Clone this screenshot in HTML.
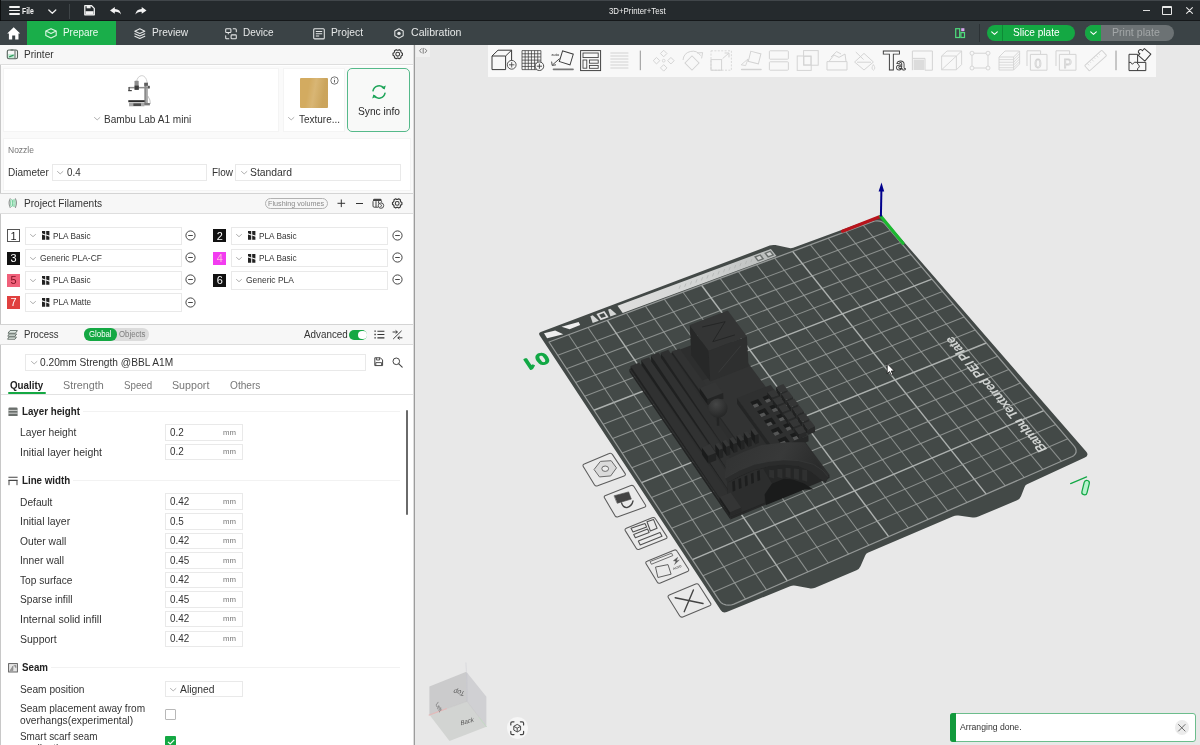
<!DOCTYPE html>
<html><head><meta charset="utf-8"><title>3D+Printer+Test</title>
<style>
*{box-sizing:border-box;margin:0;padding:0}
html,body{width:1200px;height:745px;overflow:hidden;background:#e8e8e8;font-family:"Liberation Sans",sans-serif;color:#2e2e2e}
#app{position:relative;width:1200px;height:745px;overflow:hidden;will-change:transform}
#app div,#app svg,#app span{position:absolute}
.t{white-space:nowrap;line-height:1.15}
.hdr{left:0;width:413px;background:#f7f7f7;border-top:1px solid #d4d4d4;border-bottom:1px solid #dedede}
.box{border:1px solid #e9e9e9;background:#fff}
.sw{width:13px;height:13px;font-size:10px;text-align:center;line-height:13px;color:#fff}
svg{overflow:visible}
</style></head><body>
<div id="app">
<div style="left:0;top:0;width:1200px;height:21px;background:#252a2d"></div>
<div style="left:0;top:0;width:1200px;height:1.2px;background:#41464a"></div>
<div style="left:0;top:20px;width:1200px;height:1px;background:#15181a"></div>
<div style="left:0;top:0;width:1px;height:21px;background:#0c0e0f"></div>
<div style="left:9px;top:6.3px;width:10.6px;height:1.3px;background:#f2f2f2;border-radius:1px"></div>
<div style="left:9px;top:9.9px;width:10.6px;height:1.3px;background:#f2f2f2;border-radius:1px"></div>
<div style="left:9px;top:13.4px;width:10.6px;height:1.3px;background:#f2f2f2;border-radius:1px"></div>
<div class="t" style="left:22.3px;top:6.3px;font-size:9.03px;color:#f4f4f4;font-weight:bold;transform:scaleX(0.7586);transform-origin:0 0;">File</div>
<svg style="left:48px;top:8.5px" width="9" height="6" viewBox="0 0 9 6"><path d="M0.8 1 L4.3 4.3 L7.8 1" fill="none" stroke="#eee" stroke-width="1.3" stroke-linecap="round" stroke-linejoin="round"/></svg>
<div style="left:69px;top:4px;width:1px;height:15px;background:#3e4447"></div>
<svg style="left:84px;top:5.3px" width="11" height="10.5" viewBox="0 0 11 10.5"><path d="M0.8 0.7 H7.6 L10.3 3.4 V9.8 H0.8 Z" fill="none" stroke="#f2f2f2" stroke-width="1.3" stroke-linejoin="round"/><rect x="2.6" y="0.7" width="4" height="2.6" fill="#f2f2f2"/><rect x="1.5" y="6.2" width="8" height="3.4" fill="#f2f2f2"/></svg>
<svg style="left:109.5px;top:7px" width="11.5" height="8" viewBox="0 0 11.5 8"><path d="M4.8 0 L0 3.4 L4.8 6.8 V4.9 C7.6 4.7 9.6 5.6 11 7.6 C10.8 4.2 8.6 2 4.8 1.9 Z" fill="#f2f2f2"/></svg>
<svg style="left:135px;top:7px" width="11.5" height="8" viewBox="0 0 11.5 8"><path transform="translate(11.5,0) scale(-1,1)" d="M4.8 0 L0 3.4 L4.8 6.8 V4.9 C7.6 4.7 9.6 5.6 11 7.6 C10.8 4.2 8.6 2 4.8 1.9 Z" fill="#f2f2f2"/></svg>
<div class="t" style="left:609.3px;top:6.9px;font-size:8.61px;color:#f0f0f0;transform:scaleX(0.9130);transform-origin:0 0;">3D+Printer+Test</div>
<div style="left:1142.5px;top:9.6px;width:7px;height:1.3px;background:#ddd"></div>
<div style="left:1162px;top:6.2px;width:10.2px;height:8.6px;border:1.2px solid #e8e8e8;border-top-width:2.4px;border-radius:1px"></div>
<svg style="left:1185.5px;top:7.4px" width="7" height="7" viewBox="0 0 7 7"><path d="M0.6 0.6 L6.4 6.4 M6.4 0.6 L0.6 6.4" stroke="#e8e8e8" stroke-width="1.1" stroke-linecap="round"/></svg>
<div style="left:0;top:21px;width:1200px;height:23.5px;background:#3b4346"></div>
<div style="left:26.5px;top:21px;width:89.5px;height:23.5px;background:#1aae4a"></div>
<svg style="left:7px;top:26.5px" width="13.4" height="13" viewBox="0 0 13.4 13"><path d="M6.7 0.3 L0.2 6.4 H1.9 V12.6 H5.2 V8.6 H8.2 V12.6 H11.5 V6.4 H13.2 Z" fill="#fff"/></svg>
<svg style="left:44.5px;top:28px" width="12" height="10.6" viewBox="0 0 12 10.6"><path d="M6 0.7 L11.2 3 V7.4 L6 9.9 L0.8 7.4 V3 Z M0.9 3 L6 5.4 L11.1 3" fill="none" stroke="#d9f5e1" stroke-width="1.15" stroke-linejoin="round"/></svg>
<div class="t" style="left:63.2px;top:26.4px;font-size:11.13px;color:#eafbef;transform:scaleX(0.8890);transform-origin:0 0;">Prepare</div>
<svg style="left:134px;top:27.5px" width="11.6" height="11.6" viewBox="0 0 11.6 11.6"><path d="M5.8 0.8 L10.8 3.2 L5.8 5.6 L0.8 3.2 Z M0.8 5.7 L5.8 8.1 L10.8 5.7 M0.8 8.2 L5.8 10.6 L10.8 8.2" fill="none" stroke="#e4e6e6" stroke-width="1.05" stroke-linejoin="round" stroke-linecap="round"/></svg>
<div class="t" style="left:151.8px;top:26.4px;font-size:11.13px;color:#e6e8e8;transform:scaleX(0.9145);transform-origin:0 0;">Preview</div>
<svg style="left:225px;top:27.5px" width="12" height="11.6" viewBox="0 0 12 11.6"><rect x="0.7" y="0.7" width="5.2" height="3.9" rx="0.8" fill="none" stroke="#e4e6e6" stroke-width="1.05"/><path d="M3.3 4.6 V6.2" stroke="#e4e6e6" stroke-width="1.05"/><rect x="6.1" y="6.9" width="5.2" height="3.9" rx="0.8" fill="none" stroke="#e4e6e6" stroke-width="1.05"/><path d="M8.2 0.8 H10.2 Q11.3 0.8 11.3 1.9 V3.8 M3.8 10.8 H1.8 Q0.7 10.8 0.7 9.7 V7.8" fill="none" stroke="#e4e6e6" stroke-width="1.05" stroke-linecap="round"/></svg>
<div class="t" style="left:243.3px;top:26.4px;font-size:11.13px;color:#e6e8e8;transform:scaleX(0.8995);transform-origin:0 0;">Device</div>
<svg style="left:313px;top:27.5px" width="12" height="11.6" viewBox="0 0 12 11.6"><rect x="0.7" y="0.7" width="10.6" height="10.2" rx="1" fill="none" stroke="#e4e6e6" stroke-width="1.05"/><path d="M2.8 3.6 H9.2 M2.8 5.8 H9.2 M2.8 8 H6.2" stroke="#e4e6e6" stroke-width="1.05"/></svg>
<div class="t" style="left:331.2px;top:26.4px;font-size:11.13px;color:#e6e8e8;transform:scaleX(0.9238);transform-origin:0 0;">Project</div>
<svg style="left:394.2px;top:27.8px" width="10" height="10.8" viewBox="0 0 10 10.8"><path d="M5 0.7 L9.2 3 V7.8 L5 10.1 L0.8 7.8 V3 Z" fill="none" stroke="#e4e6e6" stroke-width="1.05" stroke-linejoin="round"/><circle cx="5" cy="5.4" r="1.7" fill="#e4e6e6"/></svg>
<div class="t" style="left:411.3px;top:26.4px;font-size:11.13px;color:#e6e8e8;transform:scaleX(0.9492);transform-origin:0 0;">Calibration</div>
<svg style="left:954.5px;top:27.5px" width="10.5" height="10.5" viewBox="0 0 10.5 10.5"><rect x="0.7" y="0.7" width="4" height="8.8" fill="none" stroke="#4fdc7c" stroke-width="1.2"/><rect x="5.9" y="4.6" width="3.6" height="4.9" fill="none" stroke="#4fdc7c" stroke-width="1.2"/><rect x="6.2" y="0.2" width="3.2" height="3" fill="#d9a6f0"/></svg>
<div style="left:979px;top:24px;width:1px;height:18px;background:#2c3235"></div>
<div style="left:986.8px;top:25px;width:88.2px;height:15.8px;border-radius:8px;background:#14a843"></div>
<div style="left:1002.4px;top:25px;width:1px;height:15.8px;background:#0e8a36"></div>
<svg style="left:991.3px;top:31px" width="7" height="4.5" viewBox="0 0 7 4.5"><path d="M0.7 0.9 L3.5 3.4 L6.3 0.9" fill="none" stroke="#fff" stroke-width="1.1" stroke-linecap="round" stroke-linejoin="round"/></svg>
<div class="t" style="left:1013.3px;top:26.4px;font-size:11.13px;color:#fff;transform:scaleX(0.9075);transform-origin:0 0;">Slice plate</div>
<div style="left:1085px;top:25px;width:89.2px;height:15.8px;border-radius:8px;background:#6c7274"></div>
<div style="left:1085px;top:25px;width:16.2px;height:15.8px;border-radius:8px 0 0 8px;background:#14a843"></div>
<svg style="left:1090px;top:31px" width="7" height="4.5" viewBox="0 0 7 4.5"><path d="M0.7 0.9 L3.5 3.4 L6.3 0.9" fill="none" stroke="#fff" stroke-width="1.1" stroke-linecap="round" stroke-linejoin="round"/></svg>
<div class="t" style="left:1111.8px;top:26.4px;font-size:11.13px;color:#a3a7a8;transform:scaleX(0.9539);transform-origin:0 0;">Print plate</div>
<div style="left:0;top:44.5px;width:413px;height:701px;background:#fff"></div>
<div style="left:413px;top:44.5px;width:2.4px;height:701px;background:#dcdcdc"></div>
<div style="left:413.5px;top:44.5px;width:1.2px;height:701px;background:#9c9c9c"></div>
<div style="left:0;top:44.5px;width:1px;height:701px;background:#c8c8c8"></div>
<div class="hdr" style="top:44.5px;height:20.6px;border-top:none"></div>
<svg style="left:0;top:0" width="30" height="70" viewBox="0 0 30 70"><rect x="8" y="54" width="6.6" height="4.2" fill="#c6ebd6"/><path d="M9.2 56.9 L13.6 55.2" stroke="#2e9a5c" stroke-width="1.3"/><rect x="7.3" y="50" width="10.2" height="8.8" rx="1.6" fill="none" stroke="#55625b" stroke-width="1.1"/><path d="M15 50.2 V58.6 M10.6 50 H13.4" stroke="#55625b" stroke-width="1"/></svg>
<div class="t" style="left:24.4px;top:48.4px;font-size:10.92px;color:#333;transform:scaleX(0.9203);transform-origin:0 0;">Printer</div>
<svg style="left:0;top:0" width="1" height="1"><polygon points="401.45,52.72 402.40,53.20 402.40,55.20 401.45,55.68 400.86,56.70 400.91,57.77 399.18,58.77 398.29,58.19 397.11,58.19 396.22,58.77 394.49,57.77 394.54,56.70 393.95,55.68 393.00,55.20 393.00,53.20 393.95,52.72 394.54,51.70 394.49,50.63 396.22,49.63 397.11,50.21 398.29,50.21 399.18,49.63 400.91,50.63 400.86,51.70" fill="none" stroke="#3a3a3a" stroke-width="1.15" stroke-linejoin="round"/><circle cx="397.7" cy="54.2" r="1.92" fill="none" stroke="#3a3a3a" stroke-width="1.05"/></svg>
<div style="left:1px;top:66px;width:412px;height:127px;background:#fafafa"></div>
<div class="box" style="left:3px;top:68px;width:275.5px;height:63.5px;border-color:#f4f4f4"></div>
<div class="box" style="left:283px;top:68px;width:61.5px;height:63.5px;border-color:#f4f4f4"></div>
<svg style="left:0;top:0" width="200" height="120" viewBox="0 0 200 120">
<path d="M136.6 81.6 C137.4 74.4 145.8 72.6 147.2 82.8" fill="none" stroke="#b9b9b9" stroke-width="0.7"/>
<rect x="144.3" y="82.8" width="3.6" height="21.8" fill="#8a8a8a"/>
<rect x="146.3" y="82.8" width="1.6" height="21.8" fill="#b5b5b5"/>
<rect x="144.3" y="82.8" width="3.6" height="3" fill="#5e5e5e"/>
<rect x="128.9" y="86.9" width="20.6" height="1.5" fill="#8e8e8e"/>
<rect x="148" y="85.8" width="1.8" height="2.6" fill="#555"/>
<rect x="134.5" y="80.8" width="4.2" height="9" rx="0.6" fill="#8c8c8c"/>
<rect x="134.6" y="85.6" width="4.2" height="4.2" fill="#3c3c3c"/>
<rect x="128.4" y="87" width="1.4" height="3.4" fill="#555"/>
<rect x="128.2" y="90" width="3.6" height="1.2" fill="#444"/>
<path d="M147.9 96 Q150.6 100 150.4 104" fill="none" stroke="#aaa" stroke-width="0.7"/>
<rect x="128.3" y="100.2" width="16.4" height="2" fill="#2a2a2a"/>
<rect x="129" y="102.8" width="15.4" height="3.5" fill="#a8a8a8"/>
<rect x="133.4" y="103.4" width="7.6" height="2.6" fill="#4a4a4a"/>
<rect x="144.3" y="103" width="5.6" height="2.4" fill="#777"/>
</svg>
<svg style="left:93.5px;top:116.5px" width="6.4" height="3.4" viewBox="0 0 6.4 3.4"><path d="M0.5 0.5 L3.2 2.9 L5.9 0.5" fill="none" stroke="#a6a6a6" stroke-width="0.9" stroke-linecap="round" stroke-linejoin="round"/></svg>
<div class="t" style="left:104.3px;top:112.5px;font-size:10.82px;color:#333;transform:scaleX(0.9303);transform-origin:0 0;">Bambu Lab A1 mini</div>
<div style="left:299.5px;top:78px;width:28.5px;height:29.5px;background:#d3ab60;border-radius:1px"></div>
<div style="left:299.5px;top:78px;width:28.5px;height:29.5px;background:linear-gradient(100deg,rgba(255,255,255,0) 30%,rgba(255,255,255,.13) 50%,rgba(0,0,0,.04) 80%)"></div>
<svg style="left:329.5px;top:76px" width="9" height="9" viewBox="0 0 9 9"><circle cx="4.5" cy="4.5" r="3.7" fill="none" stroke="#555" stroke-width="0.8"/><path d="M4.5 3.9 V6.5 M4.5 2.5 V3.1" stroke="#555" stroke-width="0.9"/></svg>
<svg style="left:288.3px;top:116.5px" width="6.4" height="3.4" viewBox="0 0 6.4 3.4"><path d="M0.5 0.5 L3.2 2.9 L5.9 0.5" fill="none" stroke="#a6a6a6" stroke-width="0.9" stroke-linecap="round" stroke-linejoin="round"/></svg>
<div class="t" style="left:299.2px;top:112.5px;font-size:10.82px;color:#333;transform:scaleX(0.9218);transform-origin:0 0;">Texture...</div>
<div style="left:347.4px;top:68px;width:63px;height:64px;border:1px solid #55b98a;border-radius:5px;background:#f8f9f8"></div>
<svg style="left:369.5px;top:83px" width="18" height="18" viewBox="0 0 18 18"><path d="M3 7.8 A6.2 6.2 0 0 1 14 5.2 M15 10.2 A6.2 6.2 0 0 1 4 12.8" fill="none" stroke="#1fa55a" stroke-width="1.5" stroke-linecap="round"/><path d="M15.8 2.6 L14.6 6.4 L11.2 4.6 Z M2.2 15.4 L3.4 11.6 L6.8 13.4 Z" fill="#1fa55a"/></svg>
<div class="t" style="left:357.6px;top:105.4px;font-size:10.82px;color:#2a2a2a;transform:scaleX(0.9441);transform-origin:0 0;">Sync info</div>
<div class="box" style="left:3px;top:138px;width:407.5px;height:53px;border-color:#f4f4f4;background:#fff"></div>
<div class="t" style="left:8.0px;top:145.1px;font-size:9.03px;color:#777;transform:scaleX(0.9420);transform-origin:0 0;">Nozzle</div>
<div class="t" style="left:8.0px;top:165.8px;font-size:10.82px;color:#333;transform:scaleX(0.9300);transform-origin:0 0;">Diameter</div>
<div class="box" style="left:51.5px;top:164px;width:155px;height:16.5px"></div>
<svg style="left:57.2px;top:170.7px" width="6.4" height="3.4" viewBox="0 0 6.4 3.4"><path d="M0.5 0.5 L3.2 2.9 L5.9 0.5" fill="none" stroke="#a6a6a6" stroke-width="0.9" stroke-linecap="round" stroke-linejoin="round"/></svg>
<div class="t" style="left:66.6px;top:166.3px;font-size:10.50px;color:#333;transform:scaleX(0.9317);transform-origin:0 0;">0.4</div>
<div class="t" style="left:212.0px;top:165.8px;font-size:10.82px;color:#333;transform:scaleX(0.9197);transform-origin:0 0;">Flow</div>
<div class="box" style="left:235px;top:164px;width:165.5px;height:16.5px"></div>
<svg style="left:240.5px;top:170.7px" width="6.4" height="3.4" viewBox="0 0 6.4 3.4"><path d="M0.5 0.5 L3.2 2.9 L5.9 0.5" fill="none" stroke="#a6a6a6" stroke-width="0.9" stroke-linecap="round" stroke-linejoin="round"/></svg>
<div class="t" style="left:250.4px;top:166.2px;font-size:10.61px;color:#333;transform:scaleX(0.9758);transform-origin:0 0;">Standard</div>
<div class="hdr" style="top:193px;height:21px"></div>
<svg style="left:0;top:0" width="30" height="215" viewBox="0 0 30 215"><path d="M10.2 198.8 Q8 203 10.2 207.4 M15.4 198.8 Q17.6 203 15.4 207.4" fill="none" stroke="#8f9592" stroke-width="1.1" stroke-linecap="round"/><ellipse cx="11.7" cy="203.1" rx="1.1" ry="3.6" fill="#e3f6ea" stroke="#62c98e" stroke-width="0.85"/><ellipse cx="14" cy="203.1" rx="1.1" ry="3.6" fill="#e3f6ea" stroke="#62c98e" stroke-width="0.85"/></svg>
<div class="t" style="left:24.4px;top:197.2px;font-size:10.92px;color:#333;transform:scaleX(0.9271);transform-origin:0 0;">Project Filaments</div>
<div style="left:264.5px;top:197.6px;width:63.3px;height:11.8px;border:1px solid #b2b2b2;border-radius:6px;background:#f6f6f6"></div>
<div class="t" style="left:268.2px;top:198.9px;font-size:7.98px;color:#8a8a8a;transform:scaleX(0.9051);transform-origin:0 0;">Flushing volumes</div>
<svg style="left:336.5px;top:199.2px" width="8.6" height="8.6" viewBox="0 0 8.6 8.6"><path d="M4.3 0.5 V8.1 M0.5 4.3 H8.1" stroke="#333" stroke-width="1"/></svg>
<div style="left:355.5px;top:203px;width:7.6px;height:1px;background:#333"></div>
<svg style="left:372px;top:198px" width="12.5" height="11" viewBox="0 0 12.5 11"><path d="M1 2.2 Q1 0.8 2.4 0.8 H8.2 Q9.6 0.8 9.6 2.2 V3 H1 Z" fill="#444"/><path d="M1 3.2 V8 Q1 9.2 2.2 9.2 H6 M9.6 3.2 V4.4 M4 3.2 V9 M6.6 3.2 V5.5" fill="none" stroke="#444" stroke-width="1"/><circle cx="9" cy="7.6" r="2.7" fill="#f7f7f7" stroke="#444" stroke-width="0.95"/><path d="M8.2 6.4 L10 7.6 L8.2 8.8" fill="none" stroke="#444" stroke-width="0.8"/></svg>
<svg style="left:0;top:0" width="1" height="1"><polygon points="400.95,201.92 401.90,202.40 401.90,204.40 400.95,204.88 400.36,205.90 400.41,206.97 398.68,207.97 397.79,207.39 396.61,207.39 395.72,207.97 393.99,206.97 394.04,205.90 393.45,204.88 392.50,204.40 392.50,202.40 393.45,201.92 394.04,200.90 393.99,199.83 395.72,198.83 396.61,199.41 397.79,199.41 398.68,198.83 400.41,199.83 400.36,200.90" fill="none" stroke="#3a3a3a" stroke-width="1.15" stroke-linejoin="round"/><circle cx="397.2" cy="203.4" r="1.92" fill="none" stroke="#3a3a3a" stroke-width="1.05"/></svg>
<div style="left:7px;top:229.4px;width:13px;height:13px;background:#ffffff;border:1px solid #555;"></div>
<div class="t" style="left:10.6px;top:229.8px;font-size:10.92px;color:#222;">1</div>
<div class="box" style="left:24.5px;top:226.6px;width:157px;height:18.6px"></div>
<svg style="left:30.2px;top:234.4px" width="6" height="3.2" viewBox="0 0 6 3.2"><path d="M0.5 0.5 L3.0 2.7 L5.5 0.5" fill="none" stroke="#a6a6a6" stroke-width="0.9" stroke-linecap="round" stroke-linejoin="round"/></svg>
<svg style="left:42px;top:231.4px" width="7.4" height="8.8" viewBox="0 0 7.4 8.8"><path d="M0 0 H3.2 V3.4 L0 2.2 Z M4.2 0 H7.4 V4.6 L4.2 3.4 Z M0 3.4 L3.2 4.6 V8.8 H0 Z M4.2 4.6 L7.4 5.8 V8.8 H4.2 Z" fill="#222"/></svg>
<div class="t" style="left:52.6px;top:230.5px;font-size:9.03px;color:#333;transform:scaleX(0.9136);transform-origin:0 0;">PLA Basic</div>
<svg style="left:185.3px;top:229.9px" width="11" height="11" viewBox="0 0 11 11"><circle cx="5.5" cy="5.5" r="4.6" fill="none" stroke="#3c3c3c" stroke-width="0.95"/><path d="M3.2 5.5 H7.8" stroke="#3c3c3c" stroke-width="0.95"/></svg>
<div style="left:7px;top:251.6px;width:13px;height:13px;background:#111111;"></div>
<div class="t" style="left:10.6px;top:252.0px;font-size:10.92px;color:#fff;">3</div>
<div class="box" style="left:24.5px;top:248.8px;width:157px;height:18.6px"></div>
<svg style="left:30.2px;top:256.6px" width="6" height="3.2" viewBox="0 0 6 3.2"><path d="M0.5 0.5 L3.0 2.7 L5.5 0.5" fill="none" stroke="#a6a6a6" stroke-width="0.9" stroke-linecap="round" stroke-linejoin="round"/></svg>
<div class="t" style="left:40.0px;top:252.7px;font-size:9.03px;color:#333;transform:scaleX(0.9358);transform-origin:0 0;">Generic PLA-CF</div>
<svg style="left:185.3px;top:252.10000000000002px" width="11" height="11" viewBox="0 0 11 11"><circle cx="5.5" cy="5.5" r="4.6" fill="none" stroke="#3c3c3c" stroke-width="0.95"/><path d="M3.2 5.5 H7.8" stroke="#3c3c3c" stroke-width="0.95"/></svg>
<div style="left:7px;top:273.8px;width:13px;height:13px;background:#f0607a;"></div>
<div class="t" style="left:10.6px;top:274.2px;font-size:10.92px;color:#7a1020;">5</div>
<div class="box" style="left:24.5px;top:271.0px;width:157px;height:18.6px"></div>
<svg style="left:30.2px;top:278.8px" width="6" height="3.2" viewBox="0 0 6 3.2"><path d="M0.5 0.5 L3.0 2.7 L5.5 0.5" fill="none" stroke="#a6a6a6" stroke-width="0.9" stroke-linecap="round" stroke-linejoin="round"/></svg>
<svg style="left:42px;top:275.8px" width="7.4" height="8.8" viewBox="0 0 7.4 8.8"><path d="M0 0 H3.2 V3.4 L0 2.2 Z M4.2 0 H7.4 V4.6 L4.2 3.4 Z M0 3.4 L3.2 4.6 V8.8 H0 Z M4.2 4.6 L7.4 5.8 V8.8 H4.2 Z" fill="#222"/></svg>
<div class="t" style="left:52.6px;top:274.9px;font-size:9.03px;color:#333;transform:scaleX(0.9136);transform-origin:0 0;">PLA Basic</div>
<svg style="left:185.3px;top:274.3px" width="11" height="11" viewBox="0 0 11 11"><circle cx="5.5" cy="5.5" r="4.6" fill="none" stroke="#3c3c3c" stroke-width="0.95"/><path d="M3.2 5.5 H7.8" stroke="#3c3c3c" stroke-width="0.95"/></svg>
<div style="left:7px;top:296.0px;width:13px;height:13px;background:#e0403f;"></div>
<div class="t" style="left:10.6px;top:296.4px;font-size:10.92px;color:#fff;">7</div>
<div class="box" style="left:24.5px;top:293.2px;width:157px;height:18.6px"></div>
<svg style="left:30.2px;top:301.0px" width="6" height="3.2" viewBox="0 0 6 3.2"><path d="M0.5 0.5 L3.0 2.7 L5.5 0.5" fill="none" stroke="#a6a6a6" stroke-width="0.9" stroke-linecap="round" stroke-linejoin="round"/></svg>
<svg style="left:42px;top:298.0px" width="7.4" height="8.8" viewBox="0 0 7.4 8.8"><path d="M0 0 H3.2 V3.4 L0 2.2 Z M4.2 0 H7.4 V4.6 L4.2 3.4 Z M0 3.4 L3.2 4.6 V8.8 H0 Z M4.2 4.6 L7.4 5.8 V8.8 H4.2 Z" fill="#222"/></svg>
<div class="t" style="left:52.6px;top:297.1px;font-size:9.03px;color:#333;transform:scaleX(0.9136);transform-origin:0 0;">PLA Matte</div>
<svg style="left:185.3px;top:296.5px" width="11" height="11" viewBox="0 0 11 11"><circle cx="5.5" cy="5.5" r="4.6" fill="none" stroke="#3c3c3c" stroke-width="0.95"/><path d="M3.2 5.5 H7.8" stroke="#3c3c3c" stroke-width="0.95"/></svg>
<div style="left:213.2px;top:229.4px;width:13px;height:13px;background:#111111;"></div>
<div class="t" style="left:216.8px;top:229.8px;font-size:10.92px;color:#fff;">2</div>
<div class="box" style="left:230.7px;top:226.6px;width:157px;height:18.6px"></div>
<svg style="left:236.39999999999998px;top:234.4px" width="6" height="3.2" viewBox="0 0 6 3.2"><path d="M0.5 0.5 L3.0 2.7 L5.5 0.5" fill="none" stroke="#a6a6a6" stroke-width="0.9" stroke-linecap="round" stroke-linejoin="round"/></svg>
<svg style="left:248.2px;top:231.4px" width="7.4" height="8.8" viewBox="0 0 7.4 8.8"><path d="M0 0 H3.2 V3.4 L0 2.2 Z M4.2 0 H7.4 V4.6 L4.2 3.4 Z M0 3.4 L3.2 4.6 V8.8 H0 Z M4.2 4.6 L7.4 5.8 V8.8 H4.2 Z" fill="#222"/></svg>
<div class="t" style="left:258.8px;top:230.5px;font-size:9.03px;color:#333;transform:scaleX(0.9136);transform-origin:0 0;">PLA Basic</div>
<svg style="left:391.5px;top:229.9px" width="11" height="11" viewBox="0 0 11 11"><circle cx="5.5" cy="5.5" r="4.6" fill="none" stroke="#3c3c3c" stroke-width="0.95"/><path d="M3.2 5.5 H7.8" stroke="#3c3c3c" stroke-width="0.95"/></svg>
<div style="left:213.2px;top:251.6px;width:13px;height:13px;background:#f23cf0;"></div>
<div class="t" style="left:216.8px;top:252.0px;font-size:10.92px;color:#fbd;">4</div>
<div class="box" style="left:230.7px;top:248.8px;width:157px;height:18.6px"></div>
<svg style="left:236.39999999999998px;top:256.6px" width="6" height="3.2" viewBox="0 0 6 3.2"><path d="M0.5 0.5 L3.0 2.7 L5.5 0.5" fill="none" stroke="#a6a6a6" stroke-width="0.9" stroke-linecap="round" stroke-linejoin="round"/></svg>
<svg style="left:248.2px;top:253.6px" width="7.4" height="8.8" viewBox="0 0 7.4 8.8"><path d="M0 0 H3.2 V3.4 L0 2.2 Z M4.2 0 H7.4 V4.6 L4.2 3.4 Z M0 3.4 L3.2 4.6 V8.8 H0 Z M4.2 4.6 L7.4 5.8 V8.8 H4.2 Z" fill="#222"/></svg>
<div class="t" style="left:258.8px;top:252.7px;font-size:9.03px;color:#333;transform:scaleX(0.9136);transform-origin:0 0;">PLA Basic</div>
<svg style="left:391.5px;top:252.10000000000002px" width="11" height="11" viewBox="0 0 11 11"><circle cx="5.5" cy="5.5" r="4.6" fill="none" stroke="#3c3c3c" stroke-width="0.95"/><path d="M3.2 5.5 H7.8" stroke="#3c3c3c" stroke-width="0.95"/></svg>
<div style="left:213.2px;top:273.8px;width:13px;height:13px;background:#111111;"></div>
<div class="t" style="left:216.8px;top:274.2px;font-size:10.92px;color:#fff;">6</div>
<div class="box" style="left:230.7px;top:271.0px;width:157px;height:18.6px"></div>
<svg style="left:236.39999999999998px;top:278.8px" width="6" height="3.2" viewBox="0 0 6 3.2"><path d="M0.5 0.5 L3.0 2.7 L5.5 0.5" fill="none" stroke="#a6a6a6" stroke-width="0.9" stroke-linecap="round" stroke-linejoin="round"/></svg>
<div class="t" style="left:246.2px;top:274.9px;font-size:9.03px;color:#333;transform:scaleX(0.9358);transform-origin:0 0;">Generic PLA</div>
<svg style="left:391.5px;top:274.3px" width="11" height="11" viewBox="0 0 11 11"><circle cx="5.5" cy="5.5" r="4.6" fill="none" stroke="#3c3c3c" stroke-width="0.95"/><path d="M3.2 5.5 H7.8" stroke="#3c3c3c" stroke-width="0.95"/></svg>
<div class="hdr" style="top:324px;height:20.5px"></div>
<svg style="left:0;top:0" width="30" height="345" viewBox="0 0 30 345"><path d="M10 330.6 H17.4 L15.4 333.2 H8 Z M9.2 334 H16.6 L15 336.2 H7.8 Z M9 337 H16.4 L15 339.2 H7.6 Z" fill="#eef7f1" stroke="#5f6a64" stroke-width="0.95" stroke-linejoin="round"/></svg>
<div class="t" style="left:24.4px;top:328.0px;font-size:10.92px;color:#333;transform:scaleX(0.8771);transform-origin:0 0;">Process</div>
<div style="left:83.5px;top:328.3px;width:65.5px;height:12.4px;border-radius:6.2px;background:#dcdcdc"></div>
<div style="left:83.5px;top:328.3px;width:33.5px;height:12.4px;border-radius:6.2px;background:#14a843"></div>
<div class="t" style="left:89.2px;top:329.8px;font-size:8.40px;color:#fff;transform:scaleX(0.9308);transform-origin:0 0;">Global</div>
<div class="t" style="left:119.3px;top:329.8px;font-size:8.40px;color:#7d7d7d;transform:scaleX(0.9306);transform-origin:0 0;">Objects</div>
<div class="t" style="left:304.0px;top:328.0px;font-size:10.71px;color:#333;transform:scaleX(0.9195);transform-origin:0 0;">Advanced</div>
<div style="left:349.4px;top:329.6px;width:18px;height:10.4px;border-radius:5.2px;background:#14a843"></div>
<div style="left:358.4px;top:330.7px;width:8.2px;height:8.2px;border-radius:4.1px;background:#fff"></div>
<svg style="left:373.5px;top:330px" width="11" height="9" viewBox="0 0 11 9"><path d="M3.4 1.2 H10.4 M3.4 4.5 H10.4 M3.4 7.8 H10.4" stroke="#333" stroke-width="1.15"/><path d="M0.4 1.2 H1.8 M0.4 4.5 H1.8 M0.4 7.8 H1.8" stroke="#333" stroke-width="1.3"/></svg>
<svg style="left:391.5px;top:329.5px" width="11" height="10" viewBox="0 0 11 10"><path d="M1.2 9 L9.6 0.8" stroke="#333" stroke-width="0.95"/><path d="M0.6 2 H5.4 M3.6 0.4 L5.4 2 L3.6 3.6 M10.4 7.8 H5.8 M7.6 6.2 L5.8 7.8 L7.6 9.4" fill="none" stroke="#333" stroke-width="0.95"/></svg>
<div class="box" style="left:24.5px;top:353.6px;width:341.5px;height:17px"></div>
<svg style="left:30.5px;top:360.5px" width="6.4" height="3.4" viewBox="0 0 6.4 3.4"><path d="M0.5 0.5 L3.2 2.9 L5.9 0.5" fill="none" stroke="#a6a6a6" stroke-width="0.9" stroke-linecap="round" stroke-linejoin="round"/></svg>
<div class="t" style="left:39.8px;top:355.6px;font-size:10.71px;color:#333;transform:scaleX(0.9502);transform-origin:0 0;">0.20mm Strength @BBL A1M</div>
<svg style="left:374px;top:357.3px" width="9.4" height="9.4" viewBox="0 0 9.4 9.4"><path d="M0.8 0.8 H6.4 L8.6 3 V8.6 H0.8 Z" fill="none" stroke="#444" stroke-width="1" stroke-linejoin="round"/><path d="M2.4 0.8 V3 H5.6 V0.8 M1.8 8.4 V5.6 H7.6 V8.4" fill="none" stroke="#444" stroke-width="0.9"/></svg>
<svg style="left:392px;top:356.5px" width="11" height="11" viewBox="0 0 11 11"><circle cx="4.3" cy="4.3" r="3.3" fill="none" stroke="#444" stroke-width="1"/><path d="M6.8 6.8 L10.2 10.2" stroke="#444" stroke-width="1.1" stroke-linecap="round"/></svg>
<div class="t" style="left:9.8px;top:379.1px;font-size:10.82px;color:#222;font-weight:bold;transform:scaleX(0.9056);transform-origin:0 0;">Quality</div>
<div style="left:8px;top:391.8px;width:37.5px;height:1.8px;background:#14a843;border-radius:1px"></div>
<div class="t" style="left:63.3px;top:379.1px;font-size:10.82px;color:#777;transform:scaleX(0.9980);transform-origin:0 0;">Strength</div>
<div class="t" style="left:123.5px;top:379.1px;font-size:10.82px;color:#777;transform:scaleX(0.9017);transform-origin:0 0;">Speed</div>
<div class="t" style="left:171.8px;top:379.1px;font-size:10.82px;color:#777;transform:scaleX(0.9874);transform-origin:0 0;">Support</div>
<div class="t" style="left:229.8px;top:379.1px;font-size:10.82px;color:#777;transform:scaleX(0.9367);transform-origin:0 0;">Others</div>
<div style="left:1px;top:394.3px;width:412px;height:1px;background:#e2e2e2"></div>
<div style="left:406.4px;top:409.5px;width:1.8px;height:105px;background:#6a6a6a;border-radius:1px"></div>
<div style="left:24px;top:411.3px;width:376px;height:1px;background:#f2f2f2"></div>
<svg style="left:8px;top:406.7px" width="10" height="9.6" viewBox="0 0 10 9.6"><path d="M1.6 0.6 H8.4 Q9.6 0.6 9.6 1.8 V9 H0.4 V1.8 Q0.4 0.6 1.6 0.6 Z" fill="#6a6f6c"/><path d="M0.4 3.4 H9.6 M0.4 6.2 H9.6" stroke="#fff" stroke-width="0.7"/></svg>
<div style="left:20px;top:406.5px;width:62.5px;height:10px;background:#fff"></div>
<div class="t" style="left:22.0px;top:405.5px;font-size:10.40px;color:#222;font-weight:bold;transform:scaleX(0.9380);transform-origin:0 0;">Layer height</div>
<div class="t" style="left:20.4px;top:426.3px;font-size:10.61px;color:#333;transform:scaleX(0.9646);transform-origin:0 0;">Layer height</div>
<div class="box" style="left:164.5px;top:424.2px;width:78px;height:16.6px"></div>
<div class="t" style="left:169.6px;top:426.7px;font-size:10.29px;color:#333;transform:scaleX(0.9621);transform-origin:0 0;">0.2</div>
<div class="t" style="left:223.2px;top:428.7px;font-size:7.56px;color:#777;transform:scaleX(1.0321);transform-origin:0 0;">mm</div>
<div class="t" style="left:20.4px;top:445.9px;font-size:10.61px;color:#333;transform:scaleX(0.9936);transform-origin:0 0;">Initial layer height</div>
<div class="box" style="left:164.5px;top:443.8px;width:78px;height:16.6px"></div>
<div class="t" style="left:169.6px;top:446.3px;font-size:10.29px;color:#333;transform:scaleX(0.9621);transform-origin:0 0;">0.2</div>
<div class="t" style="left:223.2px;top:448.3px;font-size:7.56px;color:#777;transform:scaleX(1.0321);transform-origin:0 0;">mm</div>
<div style="left:24px;top:480.4px;width:376px;height:1px;background:#f2f2f2"></div>
<svg style="left:8px;top:475.8px" width="10" height="9.6" viewBox="0 0 10 9.6"><path d="M0.4 1.2 H9.6 M0.4 4.4 H9.6" stroke="#444" stroke-width="1.1"/><path d="M1 4.4 V9.2 M9 4.4 V9.2" stroke="#444" stroke-width="1"/></svg>
<div style="left:20px;top:475.6px;width:52.7px;height:10px;background:#fff"></div>
<div class="t" style="left:22.0px;top:474.6px;font-size:10.40px;color:#222;font-weight:bold;transform:scaleX(0.9380);transform-origin:0 0;">Line width</div>
<div class="t" style="left:20.4px;top:495.5px;font-size:10.61px;color:#333;transform:scaleX(0.9642);transform-origin:0 0;">Default</div>
<div class="box" style="left:164.5px;top:493.4px;width:78px;height:16.6px"></div>
<div class="t" style="left:169.6px;top:495.9px;font-size:10.29px;color:#333;transform:scaleX(0.9621);transform-origin:0 0;">0.42</div>
<div class="t" style="left:223.2px;top:497.9px;font-size:7.56px;color:#777;transform:scaleX(1.0321);transform-origin:0 0;">mm</div>
<div class="t" style="left:20.4px;top:515.1px;font-size:10.61px;color:#333;transform:scaleX(0.9884);transform-origin:0 0;">Initial layer</div>
<div class="box" style="left:164.5px;top:513.0px;width:78px;height:16.6px"></div>
<div class="t" style="left:169.6px;top:515.5px;font-size:10.29px;color:#333;transform:scaleX(0.9621);transform-origin:0 0;">0.5</div>
<div class="t" style="left:223.2px;top:517.5px;font-size:7.56px;color:#777;transform:scaleX(1.0321);transform-origin:0 0;">mm</div>
<div class="t" style="left:20.4px;top:534.6px;font-size:10.61px;color:#333;transform:scaleX(0.9678);transform-origin:0 0;">Outer wall</div>
<div class="box" style="left:164.5px;top:532.5px;width:78px;height:16.6px"></div>
<div class="t" style="left:169.6px;top:535.0px;font-size:10.29px;color:#333;transform:scaleX(0.9621);transform-origin:0 0;">0.42</div>
<div class="t" style="left:223.2px;top:537.0px;font-size:7.56px;color:#777;transform:scaleX(1.0321);transform-origin:0 0;">mm</div>
<div class="t" style="left:20.4px;top:554.2px;font-size:10.61px;color:#333;transform:scaleX(0.9672);transform-origin:0 0;">Inner wall</div>
<div class="box" style="left:164.5px;top:552.1px;width:78px;height:16.6px"></div>
<div class="t" style="left:169.6px;top:554.6px;font-size:10.29px;color:#333;transform:scaleX(0.9621);transform-origin:0 0;">0.45</div>
<div class="t" style="left:223.2px;top:556.6px;font-size:7.56px;color:#777;transform:scaleX(1.0321);transform-origin:0 0;">mm</div>
<div class="t" style="left:20.4px;top:573.8px;font-size:10.61px;color:#333;transform:scaleX(0.9558);transform-origin:0 0;">Top surface</div>
<div class="box" style="left:164.5px;top:571.7px;width:78px;height:16.6px"></div>
<div class="t" style="left:169.6px;top:574.2px;font-size:10.29px;color:#333;transform:scaleX(0.9621);transform-origin:0 0;">0.42</div>
<div class="t" style="left:223.2px;top:576.2px;font-size:7.56px;color:#777;transform:scaleX(1.0321);transform-origin:0 0;">mm</div>
<div class="t" style="left:20.4px;top:593.4px;font-size:10.61px;color:#333;transform:scaleX(0.9559);transform-origin:0 0;">Sparse infill</div>
<div class="box" style="left:164.5px;top:591.3px;width:78px;height:16.6px"></div>
<div class="t" style="left:169.6px;top:593.8px;font-size:10.29px;color:#333;transform:scaleX(0.9621);transform-origin:0 0;">0.45</div>
<div class="t" style="left:223.2px;top:595.8px;font-size:7.56px;color:#777;transform:scaleX(1.0321);transform-origin:0 0;">mm</div>
<div class="t" style="left:20.4px;top:613.0px;font-size:10.61px;color:#333;transform:scaleX(1.0019);transform-origin:0 0;">Internal solid infill</div>
<div class="box" style="left:164.5px;top:610.9px;width:78px;height:16.6px"></div>
<div class="t" style="left:169.6px;top:613.4px;font-size:10.29px;color:#333;transform:scaleX(0.9621);transform-origin:0 0;">0.42</div>
<div class="t" style="left:223.2px;top:615.4px;font-size:7.56px;color:#777;transform:scaleX(1.0321);transform-origin:0 0;">mm</div>
<div class="t" style="left:20.4px;top:632.6px;font-size:10.61px;color:#333;transform:scaleX(0.9881);transform-origin:0 0;">Support</div>
<div class="box" style="left:164.5px;top:630.5px;width:78px;height:16.6px"></div>
<div class="t" style="left:169.6px;top:633.0px;font-size:10.29px;color:#333;transform:scaleX(0.9621);transform-origin:0 0;">0.42</div>
<div class="t" style="left:223.2px;top:635.0px;font-size:7.56px;color:#777;transform:scaleX(1.0321);transform-origin:0 0;">mm</div>
<div style="left:24px;top:667.3px;width:376px;height:1px;background:#f2f2f2"></div>
<svg style="left:8px;top:662.7px" width="10" height="9.6" viewBox="0 0 10 9.6"><rect x="0.6" y="0.6" width="8.8" height="8.4" fill="#e6e6e6" stroke="#555" stroke-width="0.9"/><path d="M2 7.6 L5 3 L5 7.6 Z M5.6 2.4 L8 2.4 L8 5" fill="#999" stroke="#777" stroke-width="0.5"/></svg>
<div style="left:20px;top:662.5px;width:30.5px;height:10px;background:#fff"></div>
<div class="t" style="left:22.0px;top:661.5px;font-size:10.40px;color:#222;font-weight:bold;transform:scaleX(0.9380);transform-origin:0 0;">Seam</div>
<div class="t" style="left:20.4px;top:682.7px;font-size:10.61px;color:#333;transform:scaleX(0.9598);transform-origin:0 0;">Seam position</div>
<div class="box" style="left:164.5px;top:680.5px;width:78px;height:16.6px"></div>
<svg style="left:169.8px;top:687.5px" width="6.4" height="3.4" viewBox="0 0 6.4 3.4"><path d="M0.5 0.5 L3.2 2.9 L5.9 0.5" fill="none" stroke="#a6a6a6" stroke-width="0.9" stroke-linecap="round" stroke-linejoin="round"/></svg>
<div class="t" style="left:180.2px;top:682.8px;font-size:10.61px;color:#333;transform:scaleX(0.9724);transform-origin:0 0;">Aligned</div>
<div class="t" style="left:20.4px;top:702.1px;font-size:10.61px;color:#333;transform:scaleX(0.9510);transform-origin:0 0;">Seam placement away from</div>
<div class="t" style="left:20.4px;top:713.9px;font-size:10.61px;color:#333;transform:scaleX(0.9633);transform-origin:0 0;">overhangs(experimental)</div>
<div style="left:165.3px;top:709.3px;width:10.4px;height:10.4px;border:1px solid #b8b8b8;border-radius:1px;background:#fff"></div>
<div class="t" style="left:20.4px;top:729.7px;font-size:10.61px;color:#333;transform:scaleX(0.9327);transform-origin:0 0;">Smart scarf seam</div>
<div class="t" style="left:20.4px;top:741.5px;font-size:10.61px;color:#333;transform:scaleX(0.9861);transform-origin:0 0;">application</div>
<div style="left:165.3px;top:736.4px;width:10.4px;height:10.4px;border-radius:1px;background:#14a843"></div>
<svg style="left:166.5px;top:738.6px" width="8" height="6" viewBox="0 0 8 6"><path d="M1 2.8 L3.2 5 L7.2 0.8" fill="none" stroke="#fff" stroke-width="1.2"/></svg>
<div style="left:415px;top:44.5px;width:785px;height:701px;background:#e8e8e8"></div>
<svg style="left:0;top:0" width="1200" height="745" viewBox="0 0 1200 745"><path d="M879.6 216.1 Q881.0 215.6 882.0 216.7 L1086.1 451.6 Q1089.4 455.4 1084.9 457.5 L1027.1 484.2 Q1025.3 485.0 1024.6 486.9 L1021.0 496.3 Q1019.9 499.1 1017.1 500.3 L978.4 516.6 Q975.6 517.8 972.6 517.4 L958.5 515.6 Q955.5 515.2 952.7 516.4 L867.8 552.8 Q866.0 553.6 865.2 555.4 L860.5 566.2 Q859.3 569.0 856.5 570.2 L815.1 587.7 Q812.3 588.9 809.4 588.3 L795.8 585.7 Q792.9 585.1 790.1 586.2 L726.7 612.1 Q723.0 613.6 720.8 610.3 L539.7 335.5 Q538.0 333.0 540.8 331.9 L769.7 245.6 Q772.5 244.5 775.4 245.1 L789.3 248.0 Q791.3 248.4 793.2 247.7 Z" fill="#434947"/>
<line x1="863.2" y1="225.1" x2="1061.5" y2="461.3" stroke="#9ca09e" stroke-width="1.05" opacity="0.8"/>
<line x1="890.5" y1="230.5" x2="557.8" y2="355.3" stroke="#9ca09e" stroke-width="1.05" opacity="0.8"/>
<line x1="845.7" y1="231.6" x2="1042.9" y2="469.4" stroke="#9ca09e" stroke-width="1.05" opacity="0.8"/>
<line x1="900.7" y1="242.5" x2="566.6" y2="368.8" stroke="#9ca09e" stroke-width="1.05" opacity="0.8"/>
<line x1="828.1" y1="238.2" x2="1024.2" y2="477.5" stroke="#9ca09e" stroke-width="1.05" opacity="0.8"/>
<line x1="911.0" y1="254.5" x2="575.6" y2="382.4" stroke="#9ca09e" stroke-width="1.05" opacity="0.8"/>
<line x1="810.4" y1="244.8" x2="1005.3" y2="485.8" stroke="#9ca09e" stroke-width="1.05" opacity="0.8"/>
<line x1="921.4" y1="266.7" x2="584.7" y2="396.2" stroke="#9ca09e" stroke-width="1.05" opacity="0.8"/>
<line x1="792.6" y1="251.4" x2="986.2" y2="494.1" stroke="#b2b6b4" stroke-width="1.45" opacity="0.95"/>
<line x1="931.9" y1="279.1" x2="593.9" y2="410.2" stroke="#b2b6b4" stroke-width="1.45" opacity="0.95"/>
<line x1="774.7" y1="258.1" x2="967.0" y2="502.5" stroke="#9ca09e" stroke-width="1.05" opacity="0.8"/>
<line x1="942.5" y1="291.6" x2="603.2" y2="424.3" stroke="#9ca09e" stroke-width="1.05" opacity="0.8"/>
<line x1="756.6" y1="264.8" x2="947.7" y2="510.9" stroke="#9ca09e" stroke-width="1.05" opacity="0.8"/>
<line x1="953.2" y1="304.2" x2="612.7" y2="438.6" stroke="#9ca09e" stroke-width="1.05" opacity="0.8"/>
<line x1="738.4" y1="271.6" x2="928.2" y2="519.4" stroke="#9ca09e" stroke-width="1.05" opacity="0.8"/>
<line x1="964.1" y1="317.0" x2="622.2" y2="453.1" stroke="#9ca09e" stroke-width="1.05" opacity="0.8"/>
<line x1="720.1" y1="278.4" x2="908.5" y2="528.0" stroke="#9ca09e" stroke-width="1.05" opacity="0.8"/>
<line x1="975.1" y1="329.9" x2="631.8" y2="467.8" stroke="#9ca09e" stroke-width="1.05" opacity="0.8"/>
<line x1="701.6" y1="285.2" x2="888.7" y2="536.6" stroke="#b2b6b4" stroke-width="1.45" opacity="0.95"/>
<line x1="986.2" y1="343.0" x2="641.6" y2="482.6" stroke="#b2b6b4" stroke-width="1.45" opacity="0.95"/>
<line x1="683.0" y1="292.2" x2="868.8" y2="545.3" stroke="#9ca09e" stroke-width="1.05" opacity="0.8"/>
<line x1="997.5" y1="356.2" x2="651.5" y2="497.6" stroke="#9ca09e" stroke-width="1.05" opacity="0.8"/>
<line x1="664.3" y1="299.1" x2="848.6" y2="554.1" stroke="#9ca09e" stroke-width="1.05" opacity="0.8"/>
<line x1="1008.8" y1="369.5" x2="661.5" y2="512.9" stroke="#9ca09e" stroke-width="1.05" opacity="0.8"/>
<line x1="645.4" y1="306.1" x2="828.3" y2="563.0" stroke="#9ca09e" stroke-width="1.05" opacity="0.8"/>
<line x1="1020.3" y1="383.1" x2="671.7" y2="528.3" stroke="#9ca09e" stroke-width="1.05" opacity="0.8"/>
<line x1="626.4" y1="313.2" x2="807.9" y2="571.9" stroke="#9ca09e" stroke-width="1.05" opacity="0.8"/>
<line x1="1032.0" y1="396.8" x2="682.0" y2="543.9" stroke="#9ca09e" stroke-width="1.05" opacity="0.8"/>
<line x1="607.3" y1="320.3" x2="787.3" y2="580.9" stroke="#b2b6b4" stroke-width="1.45" opacity="0.95"/>
<line x1="1043.8" y1="410.6" x2="692.4" y2="559.7" stroke="#b2b6b4" stroke-width="1.45" opacity="0.95"/>
<line x1="588.0" y1="327.5" x2="766.5" y2="589.9" stroke="#9ca09e" stroke-width="1.05" opacity="0.8"/>
<line x1="1055.7" y1="424.6" x2="702.9" y2="575.7" stroke="#9ca09e" stroke-width="1.05" opacity="0.8"/>
<line x1="568.6" y1="334.7" x2="745.5" y2="599.1" stroke="#9ca09e" stroke-width="1.05" opacity="0.8"/>
<line x1="1067.8" y1="438.8" x2="713.6" y2="591.9" stroke="#9ca09e" stroke-width="1.05" opacity="0.8"/>
<polygon points="885.0,224.0 883.6,222.7 881.7,221.7 879.5,221.1 877.2,220.9 874.9,221.0 872.7,221.6 549.0,342.0 719.5,600.9 721.1,602.7 723.2,604.0 725.8,604.9 728.5,605.2 731.3,605.0 733.9,604.1 1071.7,456.8 1073.7,455.7 1075.1,454.1 1076.0,452.4 1076.1,450.4 1075.6,448.5 1074.5,446.7" fill="none" stroke="#9ca09e" stroke-width="1.25" opacity="0.9" stroke-linejoin="round"/>
<defs><linearGradient id="lbl" x1="0" y1="0" x2="1" y2="0"><stop offset="0" stop-color="#dededd"/><stop offset="0.55" stop-color="#d2d4d3"/><stop offset="1" stop-color="#b9bcbb"/></linearGradient></defs>
<polygon points="770.9,248.9 617.5,305.7 622.7,313.1 776.5,256.0" fill="url(#lbl)" />
<line x1="762.9" y1="254.9" x2="761.7" y2="258.1" stroke="#a9acab" stroke-width="0.6" />
<line x1="757.5" y1="256.9" x2="756.3" y2="260.2" stroke="#a9acab" stroke-width="0.6" />
<line x1="752.0" y1="258.9" x2="750.8" y2="262.2" stroke="#a9acab" stroke-width="0.6" />
<line x1="746.6" y1="260.9" x2="745.4" y2="264.2" stroke="#a9acab" stroke-width="0.6" />
<line x1="741.1" y1="262.9" x2="739.9" y2="266.2" stroke="#a9acab" stroke-width="0.6" />
<line x1="735.7" y1="265.0" x2="734.5" y2="268.3" stroke="#a9acab" stroke-width="0.6" />
<line x1="730.2" y1="267.0" x2="729.0" y2="270.3" stroke="#a9acab" stroke-width="0.6" />
<line x1="724.7" y1="269.0" x2="723.5" y2="272.3" stroke="#a9acab" stroke-width="0.6" />
<line x1="719.2" y1="271.1" x2="718.0" y2="274.4" stroke="#a9acab" stroke-width="0.6" />
<line x1="713.7" y1="273.1" x2="712.5" y2="276.4" stroke="#a9acab" stroke-width="0.6" />
<line x1="708.2" y1="275.1" x2="706.9" y2="278.5" stroke="#a9acab" stroke-width="0.6" />
<line x1="702.7" y1="277.2" x2="701.4" y2="280.5" stroke="#a9acab" stroke-width="0.6" />
<line x1="697.1" y1="279.2" x2="695.8" y2="282.6" stroke="#a9acab" stroke-width="0.6" />
<line x1="691.6" y1="281.3" x2="690.3" y2="284.6" stroke="#a9acab" stroke-width="0.6" />
<line x1="686.0" y1="283.4" x2="684.7" y2="286.7" stroke="#a9acab" stroke-width="0.6" />
<line x1="680.4" y1="285.4" x2="679.1" y2="288.8" stroke="#a9acab" stroke-width="0.6" />
<polygon points="770.6,250.5 764.1,252.9 767.9,257.7 774.4,255.3" fill="#6b706e" />
<polygon points="770.0,252.1 766.4,253.4 768.5,256.1 772.1,254.8" fill="#cfd1d0" />
<polygon points="760.5,254.2 754.0,256.6 757.8,261.5 764.3,259.1" fill="#6b706e" />
<polygon points="759.9,255.8 756.3,257.2 758.4,259.9 762.0,258.5" fill="#cfd1d0" />
<polygon points="610.3,308.8 608.1,309.6 610.4,316.5 616.6,314.3" fill="#d4d6d5" />
<polygon points="604.4,311.0 596.4,314.0 600.6,320.2 608.7,317.2" fill="#dcdcdc" />
<polygon points="603.7,313.0 599.1,314.8 601.4,318.1 606.0,316.4" fill="#434947" />
<polygon points="592.7,315.3 590.4,316.2 592.7,323.1 598.9,320.8" fill="#d4d6d5" />
<polygon points="544.0,333.3 555.2,330.4 563.3,334.2 547.1,338.3" fill="#eeeeee" />
<polygon points="561.5,326.8 578.6,322.1 580.2,325.0 569.6,329.3" fill="#eeeeee" />
<text transform="matrix(-1.2085 -1.4413 1.8500 -0.8001 1047.63 449.51)" font-family="'Liberation Sans',sans-serif" font-size="6.76" font-weight="bold" fill="#cfd2d0" letter-spacing="-0.2" text-anchor="start">Bambu Textured PEI Plate</text>
<line x1="880.8" y1="216.2" x2="842.5" y2="231.2" stroke="#b8141c" stroke-width="3.2" stroke-linecap="round"/>
<line x1="880.8" y1="216.2" x2="903.0" y2="243.2" stroke="#1cb830" stroke-width="3.2" stroke-linecap="round"/>
<line x1="880.9" y1="216.5" x2="881.4" y2="190.0" stroke="#00008c" stroke-width="2" />
<polygon points="878.6,191.5 884.2,191.5 881.5,182.6" fill="#00008c" />
<polygon points="724.4,332.5 629.3,368.9 730.2,516.1 829.4,474.6" fill="#2d2e2e" />
<polygon points="629.3,368.9 730.2,516.1 730.4,519.5 629.5,372.1" fill="#232424" />
<polygon points="829.4,474.6 730.2,516.1 730.4,519.5 829.6,477.9" fill="#272828" />
<polygon points="747.9,362.7 695.9,382.9 735.9,439.2 788.7,417.8" fill="#323333" />
<polygon points="695.9,382.9 735.9,439.2 736.0,441.0 696.0,384.7" fill="#262727" />
<polygon points="788.7,417.8 735.9,439.2 736.0,441.0 788.8,419.6" fill="#2e2f2f" />
<polygon points="639.3,362.6 630.6,366.0 730.2,513.8 739.4,510.0" fill="#303131" />
<polygon points="630.6,366.0 730.2,513.8 730.2,514.1 630.7,369.2" fill="#202121" />
<polygon points="739.4,510.0 730.2,513.8 730.2,514.1 739.4,510.3" fill="#2e2f2f" />
<polygon points="649.0,357.2 641.2,360.1 734.0,498.5 742.1,495.1" fill="#313232" />
<polygon points="641.2,360.1 734.0,498.5 734.0,498.8 641.5,365.1" fill="#1e1f1f" />
<polygon points="742.1,495.1 734.0,498.5 734.0,498.8 742.1,495.5" fill="#2e2f2f" />
<polygon points="658.6,352.6 650.9,355.6 733.7,479.3 741.7,476.0" fill="#303131" />
<polygon points="650.9,355.6 733.7,479.3 733.7,479.6 651.2,361.4" fill="#1f2020" />
<polygon points="741.7,476.0 733.7,479.3 733.7,479.6 741.7,476.3" fill="#2e2f2f" />
<polygon points="668.3,349.8 660.6,352.7 727.2,451.7 735.1,448.5" fill="#2f3030" />
<polygon points="660.6,352.7 727.2,451.7 727.2,452.0 660.9,357.7" fill="#202121" />
<polygon points="735.1,448.5 727.2,451.7 727.2,452.0 735.1,448.8" fill="#2e2f2f" />
<polygon points="679.5,348.4 671.8,351.4 705.7,399.1 713.5,396.0" fill="#313232" />
<polygon points="671.8,351.4 705.7,399.1 705.9,402.1 672.0,354.3" fill="#222323" />
<polygon points="713.5,396.0 705.7,399.1 705.9,402.1 713.7,399.0" fill="#2e2f2f" />
<polygon points="715.2,382.0 699.7,388.1 707.5,399.2 723.1,393.1" fill="#343535" />
<polygon points="699.7,388.1 707.5,399.2 707.9,404.9 700.0,393.7" fill="#1c1d1d" />
<polygon points="723.1,393.1 707.5,399.2 707.9,404.9 723.5,398.7" fill="#242525" />
<polygon points="727.8,310.6 689.7,325.0 708.6,351.1 746.9,336.3" fill="#343535" />
<polygon points="689.7,325.0 708.6,351.1 710.3,381.6 691.4,355.2" fill="#272828" />
<polygon points="746.9,336.3 708.6,351.1 710.3,381.6 748.6,366.6" fill="#2e2f2f" />
<path d="M702.2 327.0 L725.1 321.7 L712.8 341.7 L734.9 334.9" fill="none" stroke="#232424" stroke-width="0.9"/>
<path d="M740.7 345.8 L718.6 372.3" fill="none" stroke="#3c3d3d" stroke-width="0.8"/>
<line x1="717.8" y1="415.8" x2="718.1" y2="425.8" stroke="#232424" stroke-width="2.4"/>
<defs><radialGradient id="sph" cx="0.4" cy="0.3" r="0.7"><stop offset="0" stop-color="#454646"/><stop offset="1" stop-color="#262727"/></radialGradient></defs>
<circle cx="718.0" cy="408.2" r="9.6" fill="url(#sph)"/>
<polygon points="770.7,384.9 736.9,398.3 774.0,449.6 808.3,435.5" fill="#2f3030" />
<polygon points="736.9,398.3 774.0,449.6 774.3,455.3 737.2,404.0" fill="#242525" />
<polygon points="808.3,435.5 774.0,449.6 774.3,455.3 808.6,441.2" fill="#262727" />
<polygon points="770.3,394.1 762.5,397.1 766.8,403.0 774.6,399.9" fill="#1b1c1c" />
<polygon points="769.4,398.3 764.8,400.2 766.8,403.0 771.5,401.1" fill="#555656" />
<polygon points="777.1,403.2 769.3,406.3 773.7,412.2 781.4,409.1" fill="#1b1c1c" />
<polygon points="776.2,407.6 771.6,409.4 773.7,412.2 778.3,410.4" fill="#555656" />
<polygon points="783.9,412.5 776.1,415.6 780.5,421.6 788.3,418.4" fill="#1b1c1c" />
<polygon points="783.1,416.8 778.4,418.7 780.5,421.6 785.2,419.7" fill="#555656" />
<polygon points="790.8,421.8 783.0,425.0 787.4,431.0 795.2,427.8" fill="#1b1c1c" />
<polygon points="790.0,426.2 785.3,428.1 787.4,431.0 792.1,429.1" fill="#555656" />
<polygon points="797.7,431.2 789.9,434.4 794.4,440.5 802.2,437.3" fill="#1b1c1c" />
<polygon points="797.0,435.7 792.3,437.6 794.4,440.5 799.1,438.5" fill="#555656" />
<polygon points="758.1,398.9 750.3,402.0 754.6,407.9 762.4,404.8" fill="#1b1c1c" />
<polygon points="757.2,403.2 752.6,405.1 754.6,407.9 759.3,406.0" fill="#555656" />
<polygon points="764.9,408.1 757.1,411.2 761.4,417.2 769.2,414.0" fill="#1b1c1c" />
<polygon points="764.0,412.5 759.3,414.3 761.4,417.2 766.1,415.3" fill="#555656" />
<polygon points="771.7,417.4 763.9,420.6 768.2,426.5 776.0,423.4" fill="#1b1c1c" />
<polygon points="770.8,421.8 766.1,423.7 768.2,426.5 772.9,424.6" fill="#555656" />
<polygon points="778.5,426.8 770.7,430.0 775.1,436.0 782.9,432.8" fill="#1b1c1c" />
<polygon points="777.7,431.2 773.0,433.1 775.1,436.0 779.8,434.1" fill="#555656" />
<polygon points="785.5,436.2 777.6,439.4 782.0,445.5 789.9,442.3" fill="#1b1c1c" />
<polygon points="784.6,440.7 779.9,442.6 782.0,445.5 786.7,443.6" fill="#555656" />
<polygon points="783.3,384.1 776.0,387.0 780.3,392.8 787.6,389.9" fill="#353636" />
<polygon points="776.0,387.0 780.3,392.8 780.7,398.4 776.3,392.6" fill="#202121" />
<polygon points="787.6,389.9 780.3,392.8 780.7,398.4 788.0,395.5" fill="#292a2a" />
<polygon points="774.6,389.4 767.3,392.3 771.6,398.1 778.9,395.2" fill="#353636" />
<polygon points="767.3,392.3 771.6,398.1 771.8,401.9 767.5,396.1" fill="#202121" />
<polygon points="778.9,395.2 771.6,398.1 771.8,401.9 779.1,399.0" fill="#292a2a" />
<polygon points="788.7,391.2 781.4,394.2 785.7,400.0 793.0,397.1" fill="#353636" />
<polygon points="781.4,394.2 785.7,400.0 786.0,405.6 781.7,399.8" fill="#202121" />
<polygon points="793.0,397.1 785.7,400.0 786.0,405.6 793.3,402.7" fill="#292a2a" />
<polygon points="779.9,396.5 772.6,399.5 776.9,405.3 784.3,402.4" fill="#353636" />
<polygon points="772.6,399.5 776.9,405.3 777.2,409.2 772.8,403.3" fill="#202121" />
<polygon points="784.3,402.4 776.9,405.3 777.2,409.2 784.5,406.3" fill="#292a2a" />
<polygon points="794.1,398.5 786.8,401.4 791.1,407.3 798.5,404.3" fill="#353636" />
<polygon points="786.8,401.4 791.1,407.3 791.4,412.9 787.1,407.0" fill="#202121" />
<polygon points="798.5,404.3 791.1,407.3 791.4,412.9 798.8,410.0" fill="#292a2a" />
<polygon points="785.3,403.8 778.0,406.7 782.3,412.6 789.7,409.7" fill="#353636" />
<polygon points="778.0,406.7 782.3,412.6 782.6,416.5 778.2,410.6" fill="#202121" />
<polygon points="789.7,409.7 782.3,412.6 782.6,416.5 789.9,413.5" fill="#292a2a" />
<polygon points="799.5,405.7 792.2,408.7 796.6,414.6 803.9,411.6" fill="#353636" />
<polygon points="792.2,408.7 796.6,414.6 796.9,420.3 792.5,414.3" fill="#202121" />
<polygon points="803.9,411.6 796.6,414.6 796.9,420.3 804.2,417.3" fill="#292a2a" />
<polygon points="790.7,411.1 783.4,414.0 787.8,420.0 795.1,417.0" fill="#353636" />
<polygon points="783.4,414.0 787.8,420.0 788.0,423.9 783.6,417.9" fill="#202121" />
<polygon points="795.1,417.0 787.8,420.0 788.0,423.9 795.3,420.9" fill="#292a2a" />
<polygon points="805.0,413.0 797.6,416.0 802.0,421.9 809.4,419.0" fill="#353636" />
<polygon points="797.6,416.0 802.0,421.9 802.4,427.6 797.9,421.7" fill="#202121" />
<polygon points="809.4,419.0 802.0,421.9 802.4,427.6 809.7,424.6" fill="#292a2a" />
<polygon points="796.2,418.4 788.8,421.4 793.2,427.4 800.6,424.4" fill="#353636" />
<polygon points="788.8,421.4 793.2,427.4 793.4,431.3 789.0,425.3" fill="#202121" />
<polygon points="800.6,424.4 793.2,427.4 793.4,431.3 800.8,428.3" fill="#292a2a" />
<polygon points="810.5,420.4 803.1,423.4 807.6,429.4 814.9,426.3" fill="#353636" />
<polygon points="803.1,423.4 807.6,429.4 807.9,435.1 803.4,429.1" fill="#202121" />
<polygon points="814.9,426.3 807.6,429.4 807.9,435.1 815.2,432.0" fill="#292a2a" />
<polygon points="801.7,425.8 794.3,428.8 798.7,434.8 806.1,431.8" fill="#353636" />
<polygon points="794.3,428.8 798.7,434.8 798.9,438.7 794.5,432.7" fill="#202121" />
<polygon points="806.1,431.8 798.7,434.8 798.9,438.7 806.3,435.7" fill="#292a2a" />
<polygon points="754.3,428.3 750.8,429.8 754.9,435.5 758.5,434.1" fill="#363737" />
<polygon points="750.8,429.8 754.9,435.5 755.4,444.3 751.3,438.5" fill="#1a1b1b" />
<polygon points="758.5,434.1 754.9,435.5 755.4,444.3 758.9,442.8" fill="#232424" />
<polygon points="747.2,431.2 743.7,432.6 747.8,438.4 751.4,437.0" fill="#363737" />
<polygon points="743.7,432.6 747.8,438.4 748.3,447.2 744.2,441.4" fill="#1a1b1b" />
<polygon points="751.4,437.0 747.8,438.4 748.3,447.2 751.8,445.7" fill="#232424" />
<polygon points="740.1,434.1 736.6,435.5 740.7,441.3 744.2,439.8" fill="#363737" />
<polygon points="736.6,435.5 740.7,441.3 741.2,450.1 737.1,444.3" fill="#1a1b1b" />
<polygon points="744.2,439.8 740.7,441.3 741.2,450.1 744.7,448.6" fill="#232424" />
<polygon points="733.0,436.9 729.4,438.4 733.5,444.2 737.1,442.7" fill="#363737" />
<polygon points="729.4,438.4 733.5,444.2 734.0,453.0 729.9,447.2" fill="#1a1b1b" />
<polygon points="737.1,442.7 733.5,444.2 734.0,453.0 737.6,451.5" fill="#232424" />
<polygon points="725.9,439.8 722.3,441.3 726.4,447.1 730.0,445.6" fill="#363737" />
<polygon points="722.3,441.3 726.4,447.1 726.9,455.9 722.8,450.0" fill="#1a1b1b" />
<polygon points="730.0,445.6 726.4,447.1 726.9,455.9 730.4,454.4" fill="#232424" />
<polygon points="718.7,442.7 715.1,444.2 719.2,450.0 722.8,448.5" fill="#363737" />
<polygon points="715.1,444.2 719.2,450.0 719.7,458.8 715.6,453.0" fill="#1a1b1b" />
<polygon points="722.8,448.5 719.2,450.0 719.7,458.8 723.3,457.3" fill="#232424" />
<polygon points="709.8,444.1 701.8,447.4 707.9,456.1 715.9,452.9" fill="#343535" />
<polygon points="701.8,447.4 707.9,456.1 708.3,463.4 702.2,454.7" fill="#1a1b1b" />
<polygon points="715.9,452.9 707.9,456.1 708.3,463.4 716.3,460.2" fill="#222323" />
<defs><linearGradient id="slab" x1="0" y1="0" x2="1" y2="0.2"><stop offset="0" stop-color="#313232"/><stop offset="0.6" stop-color="#383939"/><stop offset="1" stop-color="#2a2b2b"/></linearGradient></defs>
<polygon points="726.2,459.9 744.0,451.8 761.7,445.1 786.8,442.2 804.5,442.2 828.2,476.9 822.3,470.2 813.4,464.3 798.6,460.6 783.9,459.9 769.1,461.4 754.3,464.3 739.5,470.2 724.8,478.3" fill="url(#slab)" />
<polygon points="727.7,482.3 739.5,476.1 754.3,469.8 769.1,466.1 783.9,464.6 798.6,466.1 810.4,471.3 819.3,477.9 825.5,482.8 828.2,477.9 729.2,517.8 727.4,508.6" fill="#252626" />
<polygon points="727.7,482.8 739.5,476.9 754.3,470.2 763.2,468.7 772.0,483.5 764.7,493.9 764.7,502.7 739.5,513.1 729.9,516.8 727.7,508.6" fill="#2c2d2d" />
<polygon points="732.2,481.7 734.8,480.5 735.4,490.5 732.7,491.7" fill="#1d1e1e" />
<polygon points="738.4,479.0 741.0,477.9 741.6,487.9 739.0,489.1" fill="#1d1e1e" />
<polygon points="744.6,476.4 747.2,475.3 747.8,485.3 745.2,486.5" fill="#1d1e1e" />
<polygon points="750.8,473.8 753.4,472.7 754.0,482.7 751.4,483.9" fill="#1d1e1e" />
<polygon points="757.0,471.2 759.6,470.1 760.2,480.1 757.6,481.3" fill="#1d1e1e" />
<polygon points="769.1,469.7 774.1,470.3 774.1,478.6 769.1,477.1" fill="#2f3030" />
<polygon points="777.4,468.7 782.4,469.3 782.4,478.4 777.4,477.0" fill="#2f3030" />
<polygon points="785.6,467.7 790.6,468.3 790.6,478.3 785.6,476.9" fill="#2f3030" />
<polygon points="793.9,468.4 798.9,469.0 798.9,479.9 793.9,478.5" fill="#2f3030" />
<polygon points="802.2,469.4 807.2,470.0 807.2,481.8 802.2,480.3" fill="#2f3030" />
<polygon points="764.7,494.6 772.0,483.8 783.9,478.8 792.7,479.4 804.5,483.8 813.4,489.4 804.5,489.4 766.1,504.9" fill="#1a1b1b" />
<polygon points="724.8,478.3 739.5,470.2 754.3,464.3 769.1,461.4 783.9,459.9 798.6,460.6 813.4,464.3 822.3,470.2 828.2,476.9 825.5,482.8 819.3,477.9 810.4,471.3 798.6,466.1 783.9,464.6 769.1,466.1 754.3,469.8 739.5,476.1 727.7,482.3" fill="#2b2c2c" />
<polyline points="724.8,478.3 739.5,470.2 754.3,464.3 769.1,461.4 783.9,459.9 798.6,460.6 813.4,464.3 822.3,470.2 828.2,476.9" fill="none" stroke="#3a3b3b" stroke-width="0.7"/>
<polygon points="730.7,492.5 719.6,497.1 730.0,512.4 741.2,507.7" fill="#343535" />
<polygon points="719.6,497.1 730.0,512.4 730.2,516.1 719.8,500.8" fill="#1e1f1f" />
<polygon points="741.2,507.7 730.0,512.4 730.2,516.1 741.5,511.4" fill="#282929" />
<text transform="matrix(-1.9739 0.7372 -0.8738 -1.3359 545.10 351.73)" font-family="'NanumGothic','Liberation Sans',sans-serif" font-size="9.8" font-weight="bold" fill="#12a845" letter-spacing="0.9" text-anchor="start" stroke="#12a845" stroke-width="0.75" stroke-linejoin="round">01</text>
<line x1="1070.6" y1="483.6" x2="1086.6" y2="476.9" stroke="#12a845" stroke-width="1.2" stroke-linecap="round"/>
<rect x="-2.6" y="-7.3" width="5.2" height="14.6" rx="2.6" transform="translate(1085.6 487.6) rotate(14)" fill="#b6f2cd" stroke="#12a845" stroke-width="1.25"/>
<path d="M583.4 466.7 Q582.2 464.8 584.3 464.0 L609.2 453.6 Q611.2 452.7 612.5 454.6 L625.0 473.4 Q626.2 475.2 624.1 476.0 L597.6 485.8 Q595.5 486.5 594.4 484.7 Z" fill="#eaeaea" stroke="#5c5c5c" stroke-width="1.05"/>
<path d="M604.6 498.1 Q603.5 496.2 605.6 495.4 L630.9 485.6 Q633.0 484.9 634.1 486.7 L645.3 504.7 Q646.5 506.6 644.4 507.3 L618.1 516.7 Q616.1 517.5 614.9 515.6 Z" fill="#eaeaea" stroke="#5c5c5c" stroke-width="1.05"/>
<path d="M625.4 530.9 Q624.3 529.1 626.3 528.2 L652.2 517.8 Q654.2 517.0 655.4 518.8 L666.6 536.1 Q667.8 538.0 665.7 538.8 L639.4 549.3 Q637.3 550.1 636.2 548.2 Z" fill="#eaeaea" stroke="#5c5c5c" stroke-width="1.05"/>
<path d="M646.2 564.0 Q645.0 562.1 647.1 561.3 L673.9 550.2 Q676.0 549.3 677.1 551.2 L688.3 568.7 Q689.5 570.6 687.5 571.5 L660.4 583.0 Q658.3 583.9 657.2 582.0 Z" fill="#eaeaea" stroke="#5c5c5c" stroke-width="1.05"/>
<path d="M668.4 597.8 Q667.3 596.0 669.3 595.1 L695.7 584.0 Q697.7 583.2 698.9 585.0 L710.5 603.1 Q711.7 604.9 709.7 605.7 L682.8 616.9 Q680.8 617.7 679.6 615.8 Z" fill="#eaeaea" stroke="#5c5c5c" stroke-width="1.05"/>
<polygon points="594.3,469.2 600.4,461.4 611.2,460.7 616.5,467.9 610.7,475.9 599.9,476.9" fill="#dadada" stroke="#6a6a6a" stroke-width="1" stroke-linejoin="round" stroke-linecap="round"/>
<ellipse cx="605.2" cy="468.7" rx="3.4" ry="2.7" fill="#ececec" stroke="#6a6a6a" stroke-width="1"/>
<polygon points="614.4,495.7 628.6,491.9 631.3,499.1 617.5,503.2" fill="#444" stroke="#444" stroke-width="0.6" stroke-linejoin="round" stroke-linecap="round"/>
<path d="M621.6 503.0 Q622.8 507.3 626.9 507.6 Q632.0 505.9 633.0 501.0" fill="none" stroke="#444" stroke-width="1.3" stroke-linecap="round"/>
<polygon points="631.0,528.3 645.0,523.5 646.7,527.1 633.0,532.0" fill="none" stroke="#505050" stroke-width="1.05" stroke-linejoin="round" stroke-linecap="round"/>
<polygon points="633.7,534.4 647.5,529.1 649.2,532.4 635.4,537.8" fill="none" stroke="#505050" stroke-width="1.05" stroke-linejoin="round" stroke-linecap="round"/>
<polygon points="647.0,521.8 653.5,519.4 657.1,528.3 650.4,531.0" fill="none" stroke="#505050" stroke-width="1.05" stroke-linejoin="round" stroke-linecap="round"/>
<polygon points="638.3,541.1 660.0,532.4 662.0,536.3 640.2,545.0" fill="none" stroke="#505050" stroke-width="1.05" stroke-linejoin="round" stroke-linecap="round"/>
<polygon points="650.4,561.4 671.6,553.2 672.8,555.6 651.8,564.1" fill="none" stroke="#505050" stroke-width="0.8" stroke-linejoin="round" stroke-linecap="round"/>
<polygon points="655.9,567.0 668.0,564.6 671.1,574.2 658.3,577.4" fill="none" stroke="#505050" stroke-width="0.9" stroke-linejoin="round" stroke-linecap="round"/>
<polygon points="673.6,560.5 677.7,557.3 676.4,560.9 679.3,560.0 674.5,564.6 676.0,561.4" fill="#555" stroke="#555" stroke-width="0.4" stroke-linejoin="round" stroke-linecap="round"/>
<text transform="translate(673.6 570.1) rotate(-22)" font-family="'Liberation Sans',sans-serif" font-size="3.2" font-weight="bold" fill="#555">AUTO</text>
<line x1="675.2" y1="597.7" x2="703.0" y2="603.5" stroke="#444" stroke-width="1.4" stroke-linecap="round"/>
<line x1="693.4" y1="589.9" x2="684.2" y2="611.7" stroke="#444" stroke-width="1.4" stroke-linecap="round"/>
<path d="M887.2 363.6 L887.2 373.6 L889.5 371.6 L891.2 375.2 L892.8 374.4 L891.2 371 L894.4 371 Z" fill="#fff" stroke="#111" stroke-width="0.8" stroke-linejoin="round"/></svg>
<div style="left:416px;top:45px;width:13.6px;height:12px;background:#f0f0f0"></div>
<svg style="left:418.6px;top:48.4px" width="8.4" height="5.6" viewBox="0 0 8.4 5.6"><path d="M2.3 0.8 L0.6 2.8 L2.3 4.8 M6.1 0.8 L7.8 2.8 L6.1 4.8 M4.2 0.3 V5.3" fill="none" stroke="#555" stroke-width="0.75" stroke-linecap="round" stroke-linejoin="round"/></svg>
<div style="left:488px;top:44.5px;width:668px;height:32.3px;background:#f8f8f8"></div>
<svg style="left:0;top:0" width="1200" height="100" viewBox="0 0 1200 100"><path d="M492 56 L498 50.2 H511.6 V62 M492 56 H505.6 L511.6 50.2 M505.6 56 V69.6 H492 V56" fill="none" stroke="#3a3a3a" stroke-width="1" stroke-linejoin="round"/>
<circle cx="511.7" cy="64.8" r="4.4" fill="#f8f8f8" stroke="#3a3a3a" stroke-width="0.85"/><path d="M509 64.8 H514.4 M511.7 62.1 V67.5" stroke="#3a3a3a" stroke-width="0.8"/>
<path d="M522.00 50.6 V69.6 M522 50.60 H540.9 M525.15 50.6 V69.6 M522 53.77 H540.9 M528.30 50.6 V69.6 M522 56.94 H540.9 M531.45 50.6 V69.6 M522 60.11 H540.9 M534.60 50.6 V69.6 M522 63.28 H540.9 M537.75 50.6 V69.6 M522 66.45 H540.9 M540.90 50.6 V69.6 M522 69.62 H540.9 " fill="none" stroke="#3a3a3a" stroke-width="0.75"/>
<circle cx="539.4" cy="66.2" r="4.3" fill="#f8f8f8" stroke="#3a3a3a" stroke-width="0.9"/><path d="M536.8 66.2 H542 M539.4 63.6 V68.8" stroke="#3a3a3a" stroke-width="0.9"/>
<rect x="-5.6" y="-5.6" width="11.2" height="11.2" transform="translate(566.3 57.8) rotate(17)" fill="none" stroke="#3a3a3a" stroke-width="0.95"/>
<path d="M553.5 69.4 H573" stroke="#777" stroke-width="1.6" stroke-linecap="round"/>
<path d="M559.6 58.6 L552.6 64.8 M551.6 61.6 L552.2 65.4 L556 64.8" fill="none" stroke="#3a3a3a" stroke-width="0.9"/>
<text x="551.6" y="56.4" font-family="'Liberation Sans',sans-serif" font-size="3.6" font-weight="bold" fill="#555">auto</text>
<rect x="580.6" y="50.6" width="20" height="20" fill="none" stroke="#3a3a3a" stroke-width="0.95"/>
<rect x="583" y="53" width="15.2" height="4.6" fill="none" stroke="#3a3a3a" stroke-width="0.85"/><rect x="583" y="60" width="3.8" height="8.2" fill="none" stroke="#3a3a3a" stroke-width="0.85"/><rect x="589.4" y="60" width="8.8" height="3.2" fill="none" stroke="#3a3a3a" stroke-width="0.85"/><rect x="589.4" y="65.4" width="8.8" height="2.9" fill="none" stroke="#3a3a3a" stroke-width="0.85"/>
<path d="M610.4 53.0 H628.4" stroke="#d2d2d2" stroke-width="1"/>
<path d="M610.4 56.0 H628.4" stroke="#d2d2d2" stroke-width="1"/>
<path d="M610.4 59.0 H628.4" stroke="#d2d2d2" stroke-width="1"/>
<path d="M610.4 62.0 H628.4" stroke="#d2d2d2" stroke-width="1"/>
<path d="M610.4 65.0 H628.4" stroke="#d2d2d2" stroke-width="1"/>
<path d="M610.4 68.0 H628.4" stroke="#d2d2d2" stroke-width="1"/>
<path d="M640.3 50.6 V70.2" stroke="#8a8a8a" stroke-width="0.9"/>
<rect x="-2.3" y="-2.3" width="4.6" height="4.6" transform="translate(663.7 53.5) rotate(45)" fill="none" stroke="#d2d2d2" stroke-width="0.9"/>
<rect x="-2.3" y="-2.3" width="4.6" height="4.6" transform="translate(670.9 60.7) rotate(45)" fill="none" stroke="#d2d2d2" stroke-width="0.9"/>
<rect x="-2.3" y="-2.3" width="4.6" height="4.6" transform="translate(663.7 67.9) rotate(45)" fill="none" stroke="#d2d2d2" stroke-width="0.9"/>
<rect x="-2.3" y="-2.3" width="4.6" height="4.6" transform="translate(656.5 60.7) rotate(45)" fill="none" stroke="#d2d2d2" stroke-width="0.9"/>
<circle cx="663.7" cy="60.7" r="1.4" fill="none" stroke="#d2d2d2" stroke-width="0.8"/>
<rect x="-5" y="-5" width="10" height="10" transform="translate(692 63) rotate(45)" fill="none" stroke="#d2d2d2" stroke-width="0.95"/>
<path d="M683 60 A 9.6 9.6 0 0 1 700.6 55.6 M697 53 L702.6 52.6 L701.6 58.4" fill="none" stroke="#d2d2d2" stroke-width="0.95"/>
<rect x="711" y="59.6" width="10.6" height="10.6" fill="none" stroke="#d2d2d2" stroke-width="0.95"/><rect x="711" y="50.8" width="20.4" height="19.4" fill="none" stroke="#d2d2d2" stroke-width="0.8" stroke-dasharray="2 1.4"/><path d="M722.6 58.6 L728.6 53.4 M724.6 53 H729 V57.4" fill="none" stroke="#d2d2d2" stroke-width="0.95"/>
<rect x="-5.2" y="-5.2" width="10.4" height="10.4" transform="translate(754.6 57.6) rotate(14)" fill="none" stroke="#d2d2d2" stroke-width="0.95"/><path d="M741.6 69.4 H761" stroke="#d2d2d2" stroke-width="1.5" stroke-linecap="round"/><path d="M748 59 L741.2 64.8 L745.6 65.6 Z" fill="none" stroke="#d2d2d2" stroke-width="0.85"/>
<rect x="769.4" y="50.8" width="19" height="8.4" rx="0.8" fill="none" stroke="#d2d2d2" stroke-width="0.95"/><rect x="769.4" y="61.8" width="19" height="8.4" rx="0.8" fill="none" stroke="#d2d2d2" stroke-width="0.95"/>
<rect x="797.2" y="56" width="14" height="14.4" fill="none" stroke="#d2d2d2" stroke-width="0.95"/><rect x="803.6" y="50.6" width="14.6" height="14.6" fill="none" stroke="#d2d2d2" stroke-width="0.95"/><rect x="804" y="56.4" width="6.8" height="8.4" fill="none" stroke="#d2d2d2" stroke-width="0.7"/>
<path d="M827 61.6 H847 V70 H827 Z M829 61.4 L834 55 L839 57.4 L845 54 L846 61.4 M831 57 L836.6 51.6 L841 54" fill="none" stroke="#d2d2d2" stroke-width="0.95" stroke-linejoin="round"/>
<path d="M854.6 62 L864 53.4 L873.4 62 L864 70 Z M855.8 52 L863.6 59.6 M857 62.2 H871" fill="none" stroke="#d2d2d2" stroke-width="0.95" stroke-linejoin="round"/><path d="M873.4 64.6 Q870.6 68.6 873.4 70.2 Q876.2 68.6 873.4 64.6 Z" fill="none" stroke="#d2d2d2" stroke-width="0.85"/>
<text x="883" y="70" font-family="'Liberation Sans',sans-serif" font-size="27.4" font-weight="bold" fill="#f8f8f8" stroke="#3a3a3a" stroke-width="0.95">T</text>
<text x="896" y="70.4" font-family="'Liberation Sans',sans-serif" font-size="16.5" font-weight="bold" fill="#f8f8f8" stroke="#3a3a3a" stroke-width="0.85">a</text>
<path d="M912.4 70.2 V51 H932.4 V70.2 H925 V58.4 H912.6" fill="none" stroke="#d2d2d2" stroke-width="0.95"/><rect x="913.6" y="59.6" width="10.4" height="10.4" fill="#dcdcdc"/>
<path d="M941.6 56 L947 51 H961.6 V64.6 L956.4 69.8 H941.6 Z M941.6 56 H956.4 L961.6 51 M956.4 56 V69.8 M941.8 69.6 L956.2 56.2" fill="none" stroke="#d2d2d2" stroke-width="0.9" stroke-linejoin="round"/>
<rect x="972" y="53.2" width="16" height="14.8" fill="none" stroke="#d2d2d2" stroke-width="0.95"/>
<circle cx="972" cy="53.2" r="2" fill="#f8f8f8" stroke="#d2d2d2" stroke-width="0.9"/>
<circle cx="988" cy="53.2" r="2" fill="#f8f8f8" stroke="#d2d2d2" stroke-width="0.9"/>
<circle cx="972" cy="68" r="2" fill="#f8f8f8" stroke="#d2d2d2" stroke-width="0.9"/>
<circle cx="988" cy="68" r="2" fill="#f8f8f8" stroke="#d2d2d2" stroke-width="0.9"/>
<path d="M999 57 L1005 51 H1019.6 V64 L1013.6 70 H999 Z M999 57 H1013.6 L1019.6 51 M1013.6 57 V70" fill="none" stroke="#d2d2d2" stroke-width="0.9" stroke-linejoin="round"/>
<path d="M999 59.6 H1013.6 L1019.6 53.6" fill="none" stroke="#d2d2d2" stroke-width="0.8"/>
<path d="M999 62.3 H1013.6 L1019.6 56.3" fill="none" stroke="#d2d2d2" stroke-width="0.8"/>
<path d="M999 65.0 H1013.6 L1019.6 59.0" fill="none" stroke="#d2d2d2" stroke-width="0.8"/>
<path d="M999 67.7 H1013.6 L1019.6 61.7" fill="none" stroke="#d2d2d2" stroke-width="0.8"/>
<path d="M1027 66 V50.8 H1040.6 V54 M1030.4 54.4 H1047 V70.2 H1030.4 Z" fill="none" stroke="#d2d2d2" stroke-width="0.95"/>
<text x="1034.6" y="67.6" font-family="'Liberation Sans',sans-serif" font-size="12.5" fill="#f8f8f8" stroke="#d2d2d2" stroke-width="0.8">0</text>
<path d="M1056 66 V50.8 H1069.6 V54 M1059.4 54.4 H1076 V70.2 H1059.4 Z" fill="none" stroke="#d2d2d2" stroke-width="0.95"/>
<text x="1063.4" y="67.6" font-family="'Liberation Sans',sans-serif" font-size="12.5" fill="#f8f8f8" stroke="#d2d2d2" stroke-width="0.8">P</text>
<g transform="translate(1095.6 60.6) rotate(-42)"><rect x="-11.6" y="-3.6" width="23.2" height="7.2" rx="0.8" fill="none" stroke="#d2d2d2" stroke-width="0.95"/><path d="M-8 -3.4 V-0.8 M-5 -3.4 V-1.6 M-2 -3.4 V-0.8 M1 -3.4 V-1.6 M4 -3.4 V-0.8 M7 -3.4 V-1.6" stroke="#d2d2d2" stroke-width="0.7"/></g>
<path d="M1116 50.6 V70.2" stroke="#8a8a8a" stroke-width="0.9"/>
<path d="M1129 54.3 H1137.6 V62.4 H1145.8 V70.6 H1129 Z M1129 62.4 H1130.9 L1132.4 64.3 L1134.5 62.2 L1137.6 62.4 M1137.6 62.4 V64 Q1139.8 65.4 1139.3 66.8 Q1138.7 68 1137.6 68.5 V70.6" fill="none" stroke="#3a3a3a" stroke-width="1" stroke-linejoin="round"/>
<g transform="translate(1144.6 54.8) rotate(41)"><path d="M-4.3 -4.6 H4.3 V4.6 H-4.3 V2.2 Q-7 3 -7.2 0.4 Q-7 -2.4 -4.3 -1.6 Z" fill="#f8f8f8" stroke="#3a3a3a" stroke-width="1" stroke-linejoin="round"/></g></svg>
<svg style="left:0;top:0" width="600" height="745" viewBox="0 0 600 745"><polygon points="429.4,686.6 466.3,671.8 467.0,701.4 429.4,714.8" fill="#cbcbcc"/>
<polygon points="466.3,671.8 486.4,696.7 486.4,726.8 467.0,701.4" fill="#d0d0d3"/>
<polygon points="429.4,714.8 467.0,701.4 486.4,726.8 449.5,740.9" fill="#d2d4d2"/>
<polyline points="429.4,714.8 467.0,701.4 486.4,726.8" fill="none" stroke="#c4c4c4" stroke-width="0.6"/>
<polyline points="466.7,672.5 467.0,701.4" fill="none" stroke="#bcbcc4" stroke-width="0.6"/>
<polyline points="465.9,662.4 466.4,671.8" fill="none" stroke="#d8d8dc" stroke-width="0.9"/>
<polyline points="428.7,715.2 446.9,708.6" fill="none" stroke="#e6b8b8" stroke-width="1.1"/>
<polyline points="486.4,726.8 479.1,717.5" fill="none" stroke="#c4dcc4" stroke-width="0.9"/>
<text transform="translate(465.4 691.4) rotate(193) skewX(-12)" font-family="'Liberation Sans',sans-serif" font-size="7" fill="#555">Top</text>
<text transform="translate(460.4 725.4) rotate(-16) skewX(-16)" font-family="'Liberation Sans',sans-serif" font-size="6.3" fill="#555">Back</text>
<text transform="translate(435.4 704.6) rotate(63) skewX(24)" font-family="'Liberation Sans',sans-serif" font-size="5.4" fill="#666">Left</text></svg>
<div style="left:506.8px;top:717px;width:21.6px;height:21.6px;border-radius:11px;background:#f6f6f6"></div>
<svg style="left:510.4px;top:720.6px" width="14.4" height="14.4" viewBox="0 0 14.4 14.4"><path d="M0.8 4 V2.2 Q0.8 0.8 2.2 0.8 H4 M10.4 0.8 H12.2 Q13.6 0.8 13.6 2.2 V4 M13.6 10.4 V12.2 Q13.6 13.6 12.2 13.6 H10.4 M4 13.6 H2.2 Q0.8 13.6 0.8 12.2 V10.4" fill="none" stroke="#444" stroke-width="1.2" stroke-linecap="round"/><path d="M7.2 3.4 L10.6 5.3 V9.1 L7.2 11 L3.8 9.1 V5.3 Z M3.9 5.4 L7.2 7.2 L10.5 5.4 M7.2 7.2 V10.9" fill="none" stroke="#444" stroke-width="0.95" stroke-linejoin="round"/></svg>
<div style="left:950px;top:712.5px;width:246px;height:29.5px;border:1px solid #6cbd8c;border-radius:3px;background:#fff;overflow:hidden"></div>
<div style="left:950px;top:712.5px;width:5.6px;height:29.5px;background:#129a3c;border-radius:3px 0 0 3px"></div>
<div class="t" style="left:960.0px;top:722.2px;font-size:9.35px;color:#333;transform:scaleX(0.9263);transform-origin:0 0;">Arranging done.</div>
<div style="left:1174.6px;top:720.4px;width:14.4px;height:14.4px;border-radius:7.2px;background:#ececec"></div>
<svg style="left:1178px;top:723.8px" width="7.6" height="7.6" viewBox="0 0 7.6 7.6"><path d="M0.5 0.5 L7.1 7.1 M7.1 0.5 L0.5 7.1" stroke="#555" stroke-width="0.85" stroke-linecap="round"/></svg>
</div>
</body></html>
